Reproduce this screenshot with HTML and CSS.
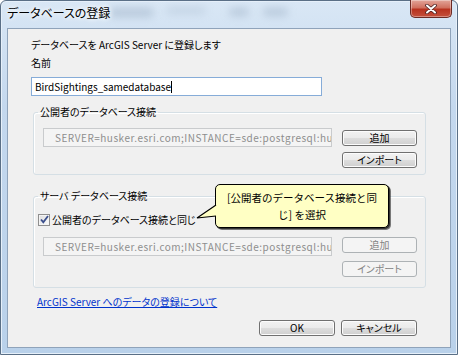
FILE: index.html
```html
<!DOCTYPE html>
<html lang="ja">
<head>
<meta charset="utf-8">
<title>データベースの登録</title>
<link rel="stylesheet" href="styles.css">
</head>
<body>
<div class="window">
  <div class="titlebar">
    <span class="title">データベースの登録</span>
    <div class="blur b1"></div><div class="blur b2"></div><div class="blur b3"></div><div class="blur b4"></div>
    <button class="close" aria-label="閉じる">
      <svg width="14" height="10" viewBox="0 0 14 10"><path d="M3 1.5 L11 8.5 M11 1.5 L3 8.5" stroke="#4a2020" stroke-width="3.6" stroke-linecap="round"/><path d="M3 1.5 L11 8.5 M11 1.5 L3 8.5" stroke="#ffffff" stroke-width="2" stroke-linecap="round"/></svg>
    </button>
  </div>
  <div class="client">
    <div class="intro">データベースを ArcGIS Server に登録します</div>
    <div class="label">名前</div>
    <div class="input">BirdSightings_samedatabase<span class="caret"></span></div>

    <fieldset class="group g1">
      <legend>公開者のデータベース接続</legend>
      <div class="row">
        <div class="conn">SERVER=husker.esri.com;INSTANCE=sde:postgresql:hu</div>
        <div class="btncol">
          <div class="btn">追加</div>
          <div class="btn">インポート</div>
        </div>
      </div>
    </fieldset>

    <fieldset class="group g2">
      <legend>サーバ データベース接続</legend>
      <div class="check">
        <span class="box"><svg width="9" height="9" viewBox="0 0 9 9"><path d="M1 4.5 L3.3 7.2 L8 1" fill="none" stroke="#3b4f8c" stroke-width="1.8"/></svg></span>
        <span>公開者のデータベース接続と同じ</span>
      </div>
      <div class="row row2">
        <div class="conn">SERVER=husker.esri.com;INSTANCE=sde:postgresql:hu</div>
        <div class="btncol">
          <div class="btn disabled">追加</div>
          <div class="btn disabled">インポート</div>
        </div>
      </div>
    </fieldset>

    <a class="link" href="#">ArcGIS Server へのデータの登録について</a>

    <div class="actions">
      <div class="btn wide">OK</div>
      <div class="btn wide">キャンセル</div>
    </div>

    <div class="callout">
      <svg class="pointer" width="22" height="18" viewBox="0 0 22 18"><path d="M20 1 L1 14 L20 12" fill="#ffffc4" stroke="#000" stroke-width="1.2" stroke-linejoin="miter"/></svg>
      <div class="callout-text">[公開者のデータベース接続と同<br>じ] を選択</div>
    </div>
  </div>
</div>
</body>
</html>
```
FILE: styles.css
```css
* { box-sizing: border-box; }
html, body { margin: 0; padding: 0; }
body {
  width: 458px;
  height: 355px;
  overflow: hidden;
  font-family: "Noto Sans CJK JP", "Noto Sans", sans-serif;
  font-size: 10px;
  font-feature-settings: "palt";
  color: #000;
  background: #fff;
}
.window {
  width: 458px;
  height: 355px;
  display: flex;
  flex-direction: column;
  border: 1px solid #5a6f86;
  border-radius: 6px 6px 0 0;
  background: linear-gradient(180deg, #d9e7f5 0%, #c4d8ee 30%, #b9d1ea 100%);
  box-shadow: inset 0 0 0 1px #e6f0fa;
}
.titlebar {
  position: relative;
  height: 27px;
  flex: none;
  display: flex;
  align-items: center;
  padding-left: 6px;
}
.title {
  font-size: 12px;
  line-height: 16px;
  margin-top: -3px;
  position: relative;
  z-index: 2;
  text-shadow: 0 0 6px #fff, 0 0 4px #fff;
}
.blur {
  position: absolute;
  border-radius: 6px;
  filter: blur(4px);
  background: #9eb1c6;
  opacity: .55;
}
.b1 { left: 108px; top: 7px; width: 45px; height: 9px; }
.b2 { left: 165px; top: 6px; width: 40px; height: 7px; opacity: .35; }
.b3 { left: 228px; top: 7px; width: 20px; height: 8px; }
.b4 { left: 262px; top: 7px; width: 25px; height: 8px; }
.close {
  position: absolute;
  right: 5px;
  top: -1px;
  width: 42px;
  height: 18px;
  border: 1px solid #6b2a24;
  border-top: none;
  border-radius: 0 0 5px 5px;
  background: linear-gradient(180deg, #e2a59a 0%, #d0705f 45%, #b8321f 55%, #c4503c 100%);
  box-shadow: inset 0 0 0 1px rgba(255,255,255,.35);
  display: flex;
  align-items: center;
  justify-content: center;
  padding: 0;
}
.client {
  position: relative;
  flex: 1;
  margin: 0 6px 6px 6px;
  border: 1px solid #8fa3ba;
  background: #f0f0f0;
  padding: 8px 0 0 23px;
}
.intro { line-height: 16px; }
.label { line-height: 16px; margin-top: 2px; }
.input {
  margin-top: 6px;
  width: 291px;
  height: 19px;
  border: 1px solid #86acd8;
  background: #fff;
  line-height: 17px;
  padding-left: 3px;
  display: flex;
  align-items: center;
  white-space: nowrap;
}
.caret {
  display: inline-block;
  width: 1px;
  height: 12px;
  background: #000;
}
.group {
  margin: 8px 0 0 2px;
  width: 393px;
  border: 1px solid #d5dfe5;
  border-radius: 3px;
  padding: 8px 7px 6px 9px;
  min-width: 0;
  box-shadow: inset 1px 1px 0 #fff;
}
.group legend {
  padding: 0 2px;
  margin-left: -5px;
  line-height: 16px;
}
.g2 { margin-top: 13px; padding-top: 9px; padding-bottom: 10px; }
.row {
  display: flex;
  gap: 10px;
  align-items: flex-start;
}
.row2 { margin-top: 11px; }
.conn {
  width: 289px;
  height: 19px;
  border: 1px solid #c9cbcd;
  background: #f4f4f4;
  color: #8e8e8e;
  line-height: 17px;
  padding-left: 11px;
  white-space: nowrap;
  overflow: hidden;
  letter-spacing: 0.5px;
}
.btncol {
  display: flex;
  flex-direction: column;
  gap: 6px;
  margin-top: 2px;
}
.row2 .btncol { margin-top: 0; gap: 8px; }
.btn {
  width: 75px;
  height: 16px;
  border: 1px solid #707070;
  border-radius: 3px;
  background: linear-gradient(180deg, #f2f2f2 0%, #ebebeb 48%, #dddddd 52%, #cfcfcf 100%);
  box-shadow: inset 0 0 0 1px #fcfcfc;
  display: flex;
  align-items: center;
  justify-content: center;
  line-height: 14px;
}
.btn.disabled {
  border-color: #adb2b5;
  background: #f4f4f4;
  color: #838383;
  box-shadow: none;
}
.check {
  display: flex;
  align-items: center;
  height: 13px;
  gap: 2px;
  margin-left: -5px;
}
.box {
  width: 12px;
  height: 12px;
  border: 1px solid #8f8f8f;
  background: linear-gradient(135deg, #dcdcdc, #fdfdfd);
  box-shadow: inset 0 0 0 1px #f4f4f4;
  display: flex;
  align-items: center;
  justify-content: center;
}
.link {
  display: block;
  margin: 6px 0 0 6px;
  line-height: 16px;
  color: #0033cc;
  text-decoration: underline;
  width: max-content;
}
.actions {
  display: flex;
  justify-content: flex-end;
  gap: 6px;
  margin-top: 10px;
  width: 386px;
}
.btn.wide { width: 76px; }
.callout {
  position: absolute;
  left: 207px;
  top: 155px;
  width: 174px;
  height: 44px;
  border: 1px solid #000;
  border-radius: 5px;
  background: #ffffc4;
  box-shadow: 1px 1px 0 #333, 2px 2px 0 rgba(0,0,0,.5);
  padding: 4px 4px 0 4px;
  z-index: 3;
}
.pointer {
  position: absolute;
  left: -20px;
  top: 19px;
}
.callout-text {
  text-align: center;
  line-height: 17px;
  font-size: 10.5px;
  font-feature-settings: normal;
  white-space: nowrap;
}
```
